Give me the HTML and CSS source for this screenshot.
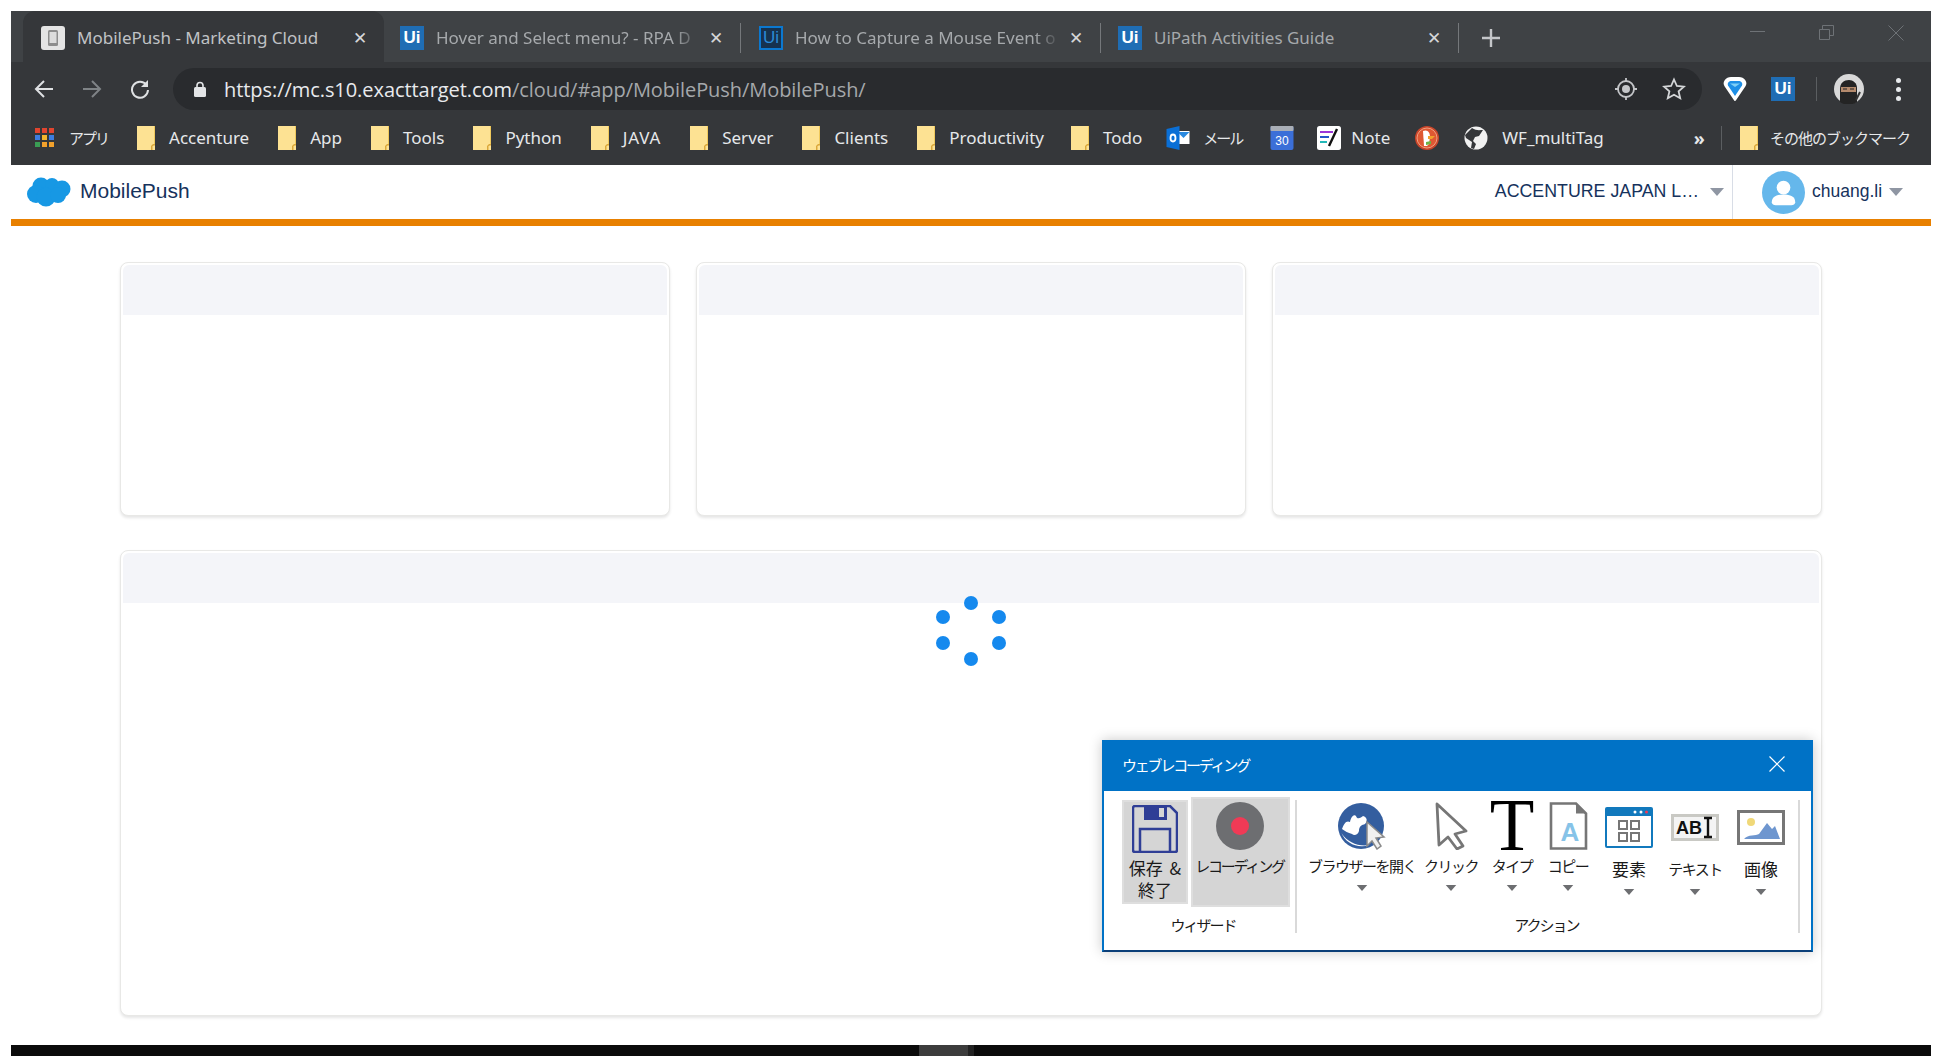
FILE: index.html
```html
<!DOCTYPE html>
<html lang="ja">
<head>
  <meta charset="UTF-8">
  <title>MobilePush - Marketing Cloud</title>
  <link rel="stylesheet" href="styles.css">
</head>
<body>
  <svg class="defs" width="0" height="0">
    <symbol id="folder" viewBox="0 0 18 24">
      <path d="M0 0h18v24H0z" fill="#fde293"/>
      <path d="M18 0v24h-1V0z" fill="#f0c95c"/>
      <path d="M14 24v-4l2-2h2v6z" fill="#dba83a"/>
      <path d="M15.500 24v-3.500l1-1H18V24z" fill="#fde293"/>
    </symbol>
    <symbol id="caret" viewBox="0 0 14 8">
      <path d="M0 0h14L7 8z"/>
    </symbol>
  </svg>

  <div class="window">
    <div class="tabstrip">
      <div class="tab tab-active">
        <svg class="favicon" viewBox="0 0 24 24"><rect width="24" height="24" rx="3" fill="#e4e4e4"/><rect x="7" y="4" width="10" height="16" rx="1.5" fill="#8d8d8d"/><rect x="8.5" y="6" width="7" height="11" fill="#dcdcdc"/></svg>
        <span class="tab-title">MobilePush - Marketing Cloud</span>
        <span class="tab-close">✕</span>
      </div>
      <div class="tab tab-second">
        <span class="ui-badge">Ui</span>
        <span class="tab-title tab-fade">Hover and Select menu? - RPA D</span>
        <span class="tab-close">✕</span>
      </div>
      <div class="tab-sep"></div>
      <div class="tab tab-third">
        <span class="ui-badge ui-outline">Ui</span>
        <span class="tab-title tab-fade">How to Capture a Mouse Event o</span>
        <span class="tab-close">✕</span>
      </div>
      <div class="tab-sep"></div>
      <div class="tab tab-fourth">
        <span class="ui-badge">Ui</span>
        <span class="tab-title">UiPath Activities Guide</span>
        <span class="tab-close">✕</span>
      </div>
      <div class="tab-sep"></div>
      <svg class="new-tab" viewBox="0 0 18 18"><path d="M9 0v18M0 9h18" stroke="#c4c6c9" stroke-width="2.4"/></svg>
      <div class="win-controls">
        <svg width="16" height="16" viewBox="0 0 16 16"><path d="M0 6.500h15" stroke="#6e7276"/></svg>
        <svg width="16" height="16" viewBox="0 0 16 16"><path d="M.5 4.500h10v10H.5zM3.500 4.500v-4h11v10h-4" fill="none" stroke="#6e7276"/></svg>
        <svg width="16" height="16" viewBox="0 0 16 16"><path d="M.5.5l15 15M15.500 .5l-15 15" stroke="#6e7276"/></svg>
      </div>
    </div>

    <div class="toolbar">
      <svg class="nav-icon" viewBox="0 0 20 20"><path d="M19 10H2M10 2l-8 8 8 8" fill="none" stroke="#dfe1e3" stroke-width="2"/></svg>
      <svg class="nav-icon" viewBox="0 0 20 20"><path d="M1 10h17M10 2l8 8-8 8" fill="none" stroke="#7f8386" stroke-width="2"/></svg>
      <svg class="nav-icon" viewBox="0 0 20 20"><path d="M16.500 6A8 8 0 1 0 18 11" fill="none" stroke="#dfe1e3" stroke-width="2"/><path d="M18 1v7h-7z" fill="#dfe1e3"/></svg>
      <div class="omnibox">
        <svg class="lock" viewBox="0 0 12 16"><path d="M3 7V4.500a3 3 0 0 1 6 0V7" fill="none" stroke="#e3e5e7" stroke-width="1.600"/><rect y="6" width="12" height="10" rx="1.500" fill="#e3e5e7"/></svg>
        <span class="url"><span class="url-main">https://mc.s10.exacttarget.com</span>/cloud/#app/MobilePush/MobilePush/</span>
        <svg class="omni-icon omni-target" viewBox="0 0 24 24"><circle cx="12" cy="12" r="8" fill="none" stroke="#c4c6c9" stroke-width="1.800"/><circle cx="12" cy="12" r="4" fill="#c4c6c9"/><path d="M12 1v4M12 19v4M1 12h4M19 12h4" stroke="#c4c6c9" stroke-width="1.800"/></svg>
        <svg class="omni-icon" viewBox="0 0 24 24"><path d="M12 2.500l2.900 6.500 7 .7-5.300 4.700 1.600 6.900-6.200-3.600-6.200 3.600 1.600-6.900L2.100 9.700l7-.7z" fill="none" stroke="#d4d6d8" stroke-width="1.800"/></svg>
      </div>
      <svg class="ext-gem" viewBox="0 0 24 26">
        <path d="M12 24L2.500 10C0 6 3.500 2 8 2h8c4.500 0 8 4 5.500 8z" fill="#fff" stroke="#fff" stroke-width="2" stroke-linejoin="round"/>
        <path d="M12 20L5 9.500C4 7 6 5 8.500 5h7C18 5 20 7 19 9.500z" fill="#1e8fe6"/>
        <path d="M7 7.500h10L12 11z" fill="#7fd0f7"/>
      </svg>
      <span class="ui-badge ext-ui">Ui</span>
      <div class="ext-sep"></div>
      <svg class="profile" viewBox="0 0 30 30"><circle cx="15" cy="15" r="15" fill="#d9d9d9"/><path d="M6 28V15C6 9 10 6 15 6c4 0 8 3 8 8v14a15 15 0 0 1-17 0z" fill="#242424"/><rect x="7" y="13" width="15" height="5" fill="#b48a6c"/><path d="M9 15h4M16 15h4" stroke="#222"/><path d="M26 18l-4 8" stroke="#333" stroke-width="2"/></svg>
      <div class="menu-dots"><i></i><i></i><i></i></div>
    </div>

    <div class="bookmarks">
      <div class="bm bm-apps">
        <svg class="apps-grid" viewBox="0 0 20 20">
          <path d="M0 0h5v5H0zM7 0h5v5H7zM14 0h5v5h-5z" fill="#e0452f"/>
          <path d="M0 7h5v5H0z" fill="#3d7de0"/><path d="M7 7h5v5H7z" fill="#f2b52c"/><path d="M14 7h5v5h-5z" fill="#3d7de0"/>
          <path d="M0 14h5v5H0z" fill="#3a9d54"/><path d="M7 14h5v5H7zM14 14h5v5h-5z" fill="#f2a12c"/>
        </svg>
        <span class="cjk-tight">アプリ</span>
      </div>
      <div class="bm"><svg class="folder"><use href="#folder"/></svg><span>Accenture</span></div>
      <div class="bm"><svg class="folder"><use href="#folder"/></svg><span>App</span></div>
      <div class="bm"><svg class="folder"><use href="#folder"/></svg><span>Tools</span></div>
      <div class="bm"><svg class="folder"><use href="#folder"/></svg><span>Python</span></div>
      <div class="bm"><svg class="folder"><use href="#folder"/></svg><span class="java">JAVA</span></div>
      <div class="bm"><svg class="folder"><use href="#folder"/></svg><span>Server</span></div>
      <div class="bm"><svg class="folder"><use href="#folder"/></svg><span>Clients</span></div>
      <div class="bm"><svg class="folder"><use href="#folder"/></svg><span>Productivity</span></div>
      <div class="bm bm-todo"><svg class="folder"><use href="#folder"/></svg><span>Todo</span></div>
      <div class="bm bm-mail">
        <svg class="bm-icon" viewBox="0 0 23 24"><path d="M10 5h13v13H10z" fill="#fff"/><path d="M11 6l6 6 6-6z" fill="#2b8ae0"/><path d="M0 3l13-3v24L0 21z" fill="#0a6fd6"/><ellipse cx="6.500" cy="12" rx="2.500" ry="3.500" fill="none" stroke="#fff" stroke-width="1.800"/></svg>
        <span class="cjk-tight">メール</span>
      </div>
      <svg class="bm-icon bm-solo" viewBox="0 0 23 24"><rect width="23" height="24" rx="2" fill="#3b6fd8"/><rect width="23" height="5" rx="1" fill="#a9aeb6"/><text class="cal-text" x="11.500" y="18.500" text-anchor="middle">30</text></svg>
      <div class="bm bm-note">
        <svg class="bm-icon" viewBox="0 0 24 24"><rect width="24" height="24" rx="2.500" fill="#fff"/><path d="M3 6h13" stroke="#9b36d8" stroke-width="2"/><path d="M3 11h9" stroke="#2456c8" stroke-width="2"/><path d="M3 16h7" stroke="#22b8b8" stroke-width="2"/><path d="M20 3L12 20" stroke="#111" stroke-width="2.400"/></svg>
        <span>Note</span>
      </div>
      <svg class="bm-icon bm-duck" viewBox="0 0 24 24"><circle cx="12" cy="12" r="12" fill="#c9452a"/><circle cx="12" cy="12" r="10" fill="#de5833" stroke="#f0a080"/><path d="M8 5c5-2 7 2 7 6l-1 7-2 2H9z" fill="#fff"/><path d="M13 10h7l-3 3h-4z" fill="#f2a12c"/><path d="M11 16l5-1v3l-5 1z" fill="#6bb345"/></svg>
      <div class="bm bm-wf">
        <svg class="bm-icon" viewBox="0 0 24 24"><circle cx="12" cy="12" r="11.500" fill="#f1f1f1"/><path d="M8 2c4 3 8 2 11 2l-4 6-4 1-2 4 3 3-2 5-3-1 1-6-6-4-1-3z" fill="#35373a"/></svg>
        <span>WF_multiTag</span>
      </div>
      <div class="bm-more">»</div>
      <div class="bm-sep"></div>
      <div class="bm bm-other"><svg class="folder"><use href="#folder"/></svg><span class="cjk-text">その他のブックマーク</span></div>
    </div>

    <header class="app-header">
      <svg class="cloud" viewBox="0 0 44 30">
        <g fill="#1798e4"><circle cx="14" cy="9" r="8.500"/><circle cx="25" cy="8" r="7"/><circle cx="35" cy="12" r="8.500"/><circle cx="9" cy="17" r="9"/><circle cx="19" cy="20" r="9.500"/><circle cx="31" cy="18" r="8"/></g>
      </svg>
      <span class="app-name">MobilePush</span>
      <span class="org-name">ACCENTURE JAPAN L…</span>
      <svg class="head-caret"><use href="#caret"/></svg>
      <div class="user-box">
        <svg class="user-pic" viewBox="0 0 44 44"><circle cx="22" cy="22" r="22" fill="#65b7eb"/><circle cx="22" cy="17" r="7" fill="#fff"/><path d="M10 32c0-6 5-8 12-8s12 2 12 8c0 2-2 3-4 3H14c-2 0-4-1-4-3z" fill="#fff"/></svg>
        <span class="user-name">chuang.li</span>
        <svg class="head-caret"><use href="#caret"/></svg>
      </div>
    </header>
    <div class="accent-bar"></div>

    <main class="content">
      <div class="card-row">
        <section class="card"><div class="card-head"></div></section>
        <section class="card"><div class="card-head"></div></section>
        <section class="card"><div class="card-head"></div></section>
      </div>
      <section class="card card-wide">
        <div class="card-head"></div>
        <svg class="spinner" viewBox="0 0 70 70">
          <g fill="#1589ee"><circle cx="35" cy="7" r="7"/><circle cx="7" cy="21" r="7"/><circle cx="63" cy="21" r="7"/><circle cx="7" cy="47" r="7"/><circle cx="63" cy="47" r="7"/><circle cx="35" cy="63" r="7"/></g>
        </svg>
      </section>
    </main>
  </div>

  <div class="taskbar"><div class="task-thumb"></div></div>

  <div class="recorder">
    <div class="rec-title">
      <span>ウェブレコーディング</span>
      <svg class="rec-close" viewBox="0 0 16 16"><path d="M.5.5l15 15M15.500 .5l-15 15" stroke="#fff" stroke-width="1.200"/></svg>
    </div>
    <div class="rec-body">
      <div class="group group-wizard">
        <div class="group-tools">
          <div class="big-btn btn-save">
            <svg class="save-icon" viewBox="0 0 46 48"><path d="M3 1h35l7 7v37a2 2 0 0 1-2 2H3a2 2 0 0 1-2-2V3a2 2 0 0 1 2-2z" fill="none" stroke="#2f3e96" stroke-width="2.500"/><path d="M12 1h23v14H12z" fill="#2f3e96"/><path d="M27 3h5v9h-5z" fill="#d5d5d5"/><path d="M8 47V24h30v23" fill="none" stroke="#2f3e96" stroke-width="2.500"/></svg>
            <span class="tool-label">保存 &amp;<br>終了</span>
          </div>
          <div class="big-btn btn-rec">
            <svg class="rec-icon" viewBox="0 0 48 48"><circle cx="24" cy="24" r="24" fill="#6d6e71"/><circle cx="24" cy="24" r="9" fill="#f03a56"/></svg>
            <span class="tool-label">レコーディング</span>
          </div>
        </div>
        <div class="group-name">ウィザード</div>
      </div>
      <div class="group group-action">
        <div class="action-tools">
          <div class="tool">
            <div class="tool-icon">
              <svg class="icon-globe" viewBox="0 0 48 48">
                <circle cx="23" cy="24" r="23" fill="#345e9f"/>
                <path d="M4 27c2-5 4-9 8-7 1-5 4-8 6-6 1 4 5 2 7 0 4 1 5 5 2 8-3 1-6 2-6 7-1 4-5 5-7 3-4-1-7-3-10-5z" fill="#fff"/>
                <path d="M3.500 31c4 10 16 16 28 12-10 2-22-2-28-12z" fill="#fff"/>
                <path d="M29 20l17 15-8 1 5 8-4 3-5-8-5 5z" fill="#f0f0f0" stroke="#8a8a8a" stroke-width="1.500"/>
              </svg>
            </div>
            <span class="tool-label">ブラウザーを開く</span>
            <svg class="tool-caret"><use href="#caret"/></svg>
          </div>
          <div class="tool">
            <div class="tool-icon">
              <svg class="icon-cursor" viewBox="0 0 33 48"><path d="M2 2l29 27-11 3 8 12-6 3-9-12-9 8z" fill="#fff" stroke="#767676" stroke-width="2.800" stroke-linejoin="round"/></svg>
            </div>
            <span class="tool-label">クリック</span>
            <svg class="tool-caret"><use href="#caret"/></svg>
          </div>
          <div class="tool">
            <div class="tool-icon"><span class="icon-t">T</span></div>
            <span class="tool-label">タイプ</span>
            <svg class="tool-caret"><use href="#caret"/></svg>
          </div>
          <div class="tool">
            <div class="tool-icon">
              <svg class="icon-copy" viewBox="0 0 39 48"><path d="M2 1.500h25l10 10V46.500H2z" fill="#fff" stroke="#767676" stroke-width="2.600"/><path d="M27 1.500v10h10z" fill="#767676"/><text class="copy-a" x="21" y="39" text-anchor="middle">A</text></svg>
            </div>
            <span class="tool-label">コピー</span>
            <svg class="tool-caret"><use href="#caret"/></svg>
          </div>
          <div class="tool tool-low">
            <div class="tool-icon">
              <svg class="icon-window" viewBox="0 0 48 41"><rect width="48" height="41" rx="2" fill="#1179bd"/><rect x="2" y="9" width="44" height="30" fill="#fff"/><g fill="#fff"><circle cx="30" cy="5" r="1.500"/><circle cx="36" cy="5" r="1.500"/></g><circle cx="41.500" cy="5" r="1.500" fill="#f03a56"/><g fill="none" stroke="#767676" stroke-width="2"><rect x="14" y="14" width="8" height="8"/><rect x="26" y="14" width="8" height="8"/><rect x="14" y="26" width="8" height="8"/><rect x="26" y="26" width="8" height="8"/></g></svg>
            </div>
            <span class="tool-label label-kanji">要素</span>
            <svg class="tool-caret"><use href="#caret"/></svg>
          </div>
          <div class="tool tool-low">
            <div class="tool-icon">
              <svg class="icon-abi" viewBox="0 0 48 27"><rect width="48" height="27" fill="#c9c9c4"/><rect x="3" y="3" width="42" height="21" fill="#f4f4f4"/><text class="abi-text" x="5" y="20">AB</text><path d="M33 4h8M33 23h8M37 4v19" stroke="#111" stroke-width="2.400"/></svg>
            </div>
            <span class="tool-label">テキスト</span>
            <svg class="tool-caret"><use href="#caret"/></svg>
          </div>
          <div class="tool tool-low">
            <div class="tool-icon">
              <svg class="icon-image" viewBox="0 0 48 35"><rect x="1.500" y="1.500" width="45" height="32" fill="#fff" stroke="#767676" stroke-width="3"/><circle cx="14" cy="12" r="4" fill="#f0d878"/><path d="M7 29c4-5 12-3 15-5l8-11 5 6 3-3 5 13z" fill="#6e96cf"/></svg>
            </div>
            <span class="tool-label label-kanji">画像</span>
            <svg class="tool-caret"><use href="#caret"/></svg>
          </div>
        </div>
        <div class="group-name">アクション</div>
      </div>
    </div>
  </div>
</body>
</html>
```

FILE: styles.css
```css
html, body {
  margin: 0;
  height: 100%;
}
body {
  position: relative;
  background: #fff;
  overflow: hidden;
  font-family: "Liberation Sans", Arial, sans-serif;
}
.defs {
  position: absolute;
}

.window {
  margin: 11px 11px 0;
  height: 1034px;
  display: flex;
  flex-direction: column;
}

/* browser chrome */
.tabstrip {
  height: 51px;
  background: #3f4245;
  padding-left: 12px;
  display: flex;
  align-items: center;
  color: #a6a9ac;
  font-family: "Noto Sans", sans-serif;
  font-size: 17px;
}
.tab {
  height: 51px;
  display: flex;
  align-items: center;
  box-sizing: border-box;
  padding-top: 3px;
}
.tab-active {
  width: 361px;
  padding-left: 18px;
  background: #35373a;
  border-radius: 12px 12px 0 0;
  color: #c0c2c5;
}
.tab-second {
  width: 356px;
  padding-left: 16px;
}
.tab-third {
  width: 359px;
  padding-left: 18px;
}
.tab-fourth {
  width: 357px;
  padding-left: 17px;
}
.favicon {
  width: 24px;
  height: 24px;
  flex: none;
}
.ui-badge {
  width: 24px;
  height: 24px;
  flex: none;
  background: #1f6db4;
  color: #fff;
  font-family: "Liberation Sans", sans-serif;
  font-weight: bold;
  font-size: 17px;
  line-height: 24px;
  text-align: center;
}
.ui-outline {
  box-sizing: border-box;
  background: #16324f;
  border: 2px solid #0b78d0;
  color: #2c8bd8;
  line-height: 20px;
  font-weight: normal;
}
.tab-title {
  margin: 0 0 2px 12px;
  flex: 1;
  min-width: 0;
  white-space: nowrap;
  overflow: hidden;
}
.tab-fade {
  -webkit-mask-image: linear-gradient(to right, #000 90%, transparent 100%);
  mask-image: linear-gradient(to right, #000 90%, transparent 100%);
}
.tab-close {
  width: 18px;
  margin: 0 15px 0 6px;
  text-align: center;
  font-size: 17px;
  color: #d4d6d8;
  font-family: "DejaVu Sans", sans-serif;
}
.tab-sep {
  width: 1px;
  height: 30px;
  margin-top: 3px;
  background: #75787b;
}
.new-tab {
  width: 18px;
  height: 18px;
  margin: 3px 0 0 23px;
}
.win-controls {
  margin: 0 27px 0 auto;
  align-self: flex-start;
  padding-top: 14px;
  display: flex;
  gap: 53px;
}

.toolbar {
  height: 48px;
  background: #35373a;
  display: flex;
  align-items: center;
  padding: 0 0 0 23px;
  box-sizing: border-box;
}
.nav-icon {
  width: 20px;
  height: 20px;
  margin-right: 28px;
  margin-top: 6px;
  flex: none;
}
.nav-icon:nth-child(3) {
  margin-right: 23px;
}
.omnibox {
  width: 1529px;
  height: 42px;
  margin-top: 6px;
  box-sizing: border-box;
  padding: 0 16px 0 21px;
  background: #292b2e;
  border-radius: 21px;
  display: flex;
  align-items: center;
  flex: none;
}
.lock {
  width: 12px;
  height: 16px;
  flex: none;
}
.url {
  margin-left: 18px;
  font-family: "Open Sans", sans-serif;
  font-size: 20px;
  letter-spacing: -0.06px;
  color: #a5a8ab;
  white-space: nowrap;
  flex: 1;
}
.url-main {
  color: #e8eaed;
}
.omni-icon {
  width: 24px;
  height: 24px;
  flex: none;
}
.omni-target {
  margin-right: 24px;
}
.ext-gem {
  width: 24px;
  height: 26px;
  margin: 6px 0 0 21px;
  flex: none;
}
.ext-ui {
  margin: 6px 0 0 24px;
}
.ext-sep {
  width: 1px;
  height: 24px;
  margin: 6px 17px 0 21px;
  background: #5b5e61;
}
.profile {
  width: 30px;
  height: 30px;
  margin-top: 6px;
  flex: none;
}
.menu-dots {
  margin: 6px 0 0 32px;
  display: flex;
  flex-direction: column;
  gap: 4px;
}
.menu-dots i {
  width: 5px;
  height: 5px;
  border-radius: 50%;
  background: #e8eaed;
}

.bookmarks {
  height: 55px;
  background: #35373a;
  display: flex;
  align-items: center;
  padding: 0 0 0 24px;
  box-sizing: border-box;
  color: #e6e8ea;
  font-family: "Noto Sans", "Noto Sans CJK JP", sans-serif;
  font-size: 17px;
}
.bm {
  display: flex;
  align-items: center;
  gap: 14px;
  margin-right: 29px;
  white-space: nowrap;
}
.bm-todo {
  margin: 0 24px 0 -2px;
}
.bm-mail {
  gap: 13px;
}
.bm-note {
  gap: 10px;
}
.java {
  letter-spacing: 0.8px;
}
.cjk-tight {
  font-size: 15px;
  letter-spacing: -2px;
}
.cjk-text {
  font-size: 15px;
  letter-spacing: -1px;
}
.apps-grid {
  width: 20px;
  height: 20px;
}
.folder {
  width: 18px;
  height: 24px;
  flex: none;
}
.bm-icon {
  width: 24px;
  height: 24px;
  flex: none;
}
.bm-solo {
  margin: 0 23px 0 -1px;
}
.bm-duck {
  margin: 0 25px 0 -4px;
}
.bm-wf {
  margin-right: 0;
}
.cal-text {
  font: 12px "Liberation Sans", sans-serif;
  fill: #fff;
}
.bm-more {
  margin-left: 90px;
  font-size: 18px;
  font-weight: bold;
}
.bm-sep {
  width: 1px;
  height: 24px;
  margin: 0 18px 0 16px;
  background: #5b5e61;
}
.bm-other {
  margin-right: 0;
  gap: 12px;
}

/* app header */
.app-header {
  height: 54px;
  display: flex;
  align-items: center;
  padding-left: 16px;
  box-sizing: border-box;
  color: #16325c;
}
.cloud {
  width: 44px;
  height: 30px;
  flex: none;
}
.app-name {
  margin-left: 9px;
  margin-bottom: 2px;
  font-size: 21px;
  margin-right: auto;
}
.org-name {
  font-size: 17.800px;
  margin-bottom: 2px;
}
.head-caret {
  width: 14px;
  height: 8px;
  margin-left: 11px;
  fill: #8f96a3;
}
.user-box {
  height: 54px;
  margin-left: 8px;
  width: 199px;
  box-sizing: border-box;
  padding-left: 29px;
  border-left: 1px solid #d8dde6;
  display: flex;
  align-items: center;
}
.user-pic {
  width: 43px;
  height: 43px;
  flex: none;
}
.user-name {
  margin: 0 0 2px 7px;
  font-size: 17.500px;
}
.user-box .head-caret {
  margin-left: 7px;
}
.accent-bar {
  height: 7px;
  background: #e88000;
}

/* page body */
.content {
  flex: 1;
  padding: 36px 109px 0;
  display: flex;
  flex-direction: column;
  gap: 34px;
}
.card-row {
  display: grid;
  grid-template-columns: repeat(3, 550px);
  gap: 26px;
}
.card {
  height: 254px;
  box-sizing: border-box;
  padding: 2px;
  background: #fff;
  border: 1px solid #e8e8e6;
  border-radius: 8px;
  box-shadow: 0 2px 3px rgba(0, 0, 0, 0.1);
}
.card-head {
  height: 50px;
  background: #f4f5f9;
  border-radius: 6px 6px 0 0;
}
.card-wide {
  height: 466px;
  position: relative;
}
.spinner {
  position: absolute;
  left: 815px;
  top: 45px;
  width: 70px;
  height: 70px;
}

.taskbar {
  height: 11px;
  margin: 0 11px;
  background: #0b0b0b;
  position: relative;
}
.task-thumb {
  position: absolute;
  left: 908px;
  width: 49px;
  height: 11px;
  background: #3c3c3c;
  border-right: 6px solid #222;
}

/* recording dialog */
.recorder {
  position: absolute;
  left: 1102px;
  top: 740px;
  width: 711px;
  height: 212px;
  box-sizing: border-box;
  background: #fff;
  border: 2px solid #0072c6;
  border-bottom-color: #0b3f78;
  box-shadow: 0 0 12px rgba(0, 0, 0, 0.22);
  font-family: "Noto Sans CJK JP", sans-serif;
  color: #1a1a1a;
}
.rec-title {
  height: 49px;
  box-sizing: border-box;
  background: #0072c6;
  color: #fff;
  font-size: 15px;
  letter-spacing: -2.200px;
  display: flex;
  align-items: center;
  justify-content: space-between;
  padding: 0 26px 5px 18px;
}
.rec-close {
  width: 16px;
  height: 16px;
}
.rec-body {
  display: flex;
  height: 159px;
}
.group {
  box-sizing: border-box;
  margin-top: 9px;
  height: 133px;
  border-right: 2px solid #d9d9d9;
  display: flex;
  flex-direction: column;
  position: relative;
}
.group-wizard {
  width: 193px;
  padding-left: 18px;
}
.group-action {
  width: 503px;
  padding-left: 9px;
}
.group-tools {
  display: flex;
  align-items: center;
  gap: 3px;
  height: 104px;
}
.big-btn {
  box-sizing: border-box;
  background: #d5d5d5;
  border: 2px solid #dedede;
  display: flex;
  flex-direction: column;
  align-items: center;
  flex: none;
}
.btn-save {
  width: 66px;
  height: 104px;
  padding-top: 3px;
}
.btn-rec {
  width: 99px;
  height: 110px;
  padding-top: 3px;
}
.save-icon {
  width: 46px;
  height: 48px;
  flex: none;
}
.rec-icon {
  width: 48px;
  height: 48px;
  margin-right: 2px;
  flex: none;
}
.tool-label {
  margin-top: 5px;
  font-size: 15px;
  letter-spacing: -1.500px;
  line-height: 22px;
  text-align: center;
  white-space: nowrap;
}
.label-kanji {
  font-size: 17px;
  letter-spacing: 0;
}
.btn-save .tool-label {
  margin-top: 4px;
  font-size: 17px;
  letter-spacing: 0;
  word-spacing: 3px;
}
.btn-rec .tool-label {
  margin: 5px 2px 0 0;
  font-size: 15px;
  letter-spacing: -2.200px;
}
.group-name {
  position: absolute;
  top: 115px;
  font-size: 15px;
  letter-spacing: -2px;
  line-height: 20px;
  text-align: center;
}
.group-wizard .group-name {
  left: 0;
  width: 198px;
}
.group-action .group-name {
  left: -2px;
  width: 503px;
}
.action-tools {
  display: grid;
  grid-template-columns: 112px 66px 56px 56px 66px 66px 66px;
}
.tool {
  display: flex;
  flex-direction: column;
  align-items: center;
}
.tool-icon {
  height: 48px;
  margin-top: 2px;
  display: flex;
  align-items: center;
  justify-content: center;
}
.tool-low .tool-icon {
  height: 51px;
}
.tool-caret {
  width: 12px;
  height: 6px;
  margin-top: 8px;
  fill: #6d6e71;
}
.tool-low .tool-caret {
  margin-top: 9px;
}
.icon-globe {
  width: 48px;
  height: 48px;
}
.icon-cursor {
  width: 33px;
  height: 48px;
}
.icon-t {
  font: 73px/48px "Liberation Serif", serif;
  color: #000;
}
.icon-copy {
  width: 39px;
  height: 48px;
}
.copy-a {
  font: bold 26px "Liberation Sans", sans-serif;
  fill: #86c3e8;
}
.icon-window {
  width: 48px;
  height: 41px;
}
.icon-abi {
  width: 48px;
  height: 27px;
}
.abi-text {
  font: bold 18px "Liberation Sans", sans-serif;
  fill: #111;
}
.icon-image {
  width: 48px;
  height: 35px;
}
```
